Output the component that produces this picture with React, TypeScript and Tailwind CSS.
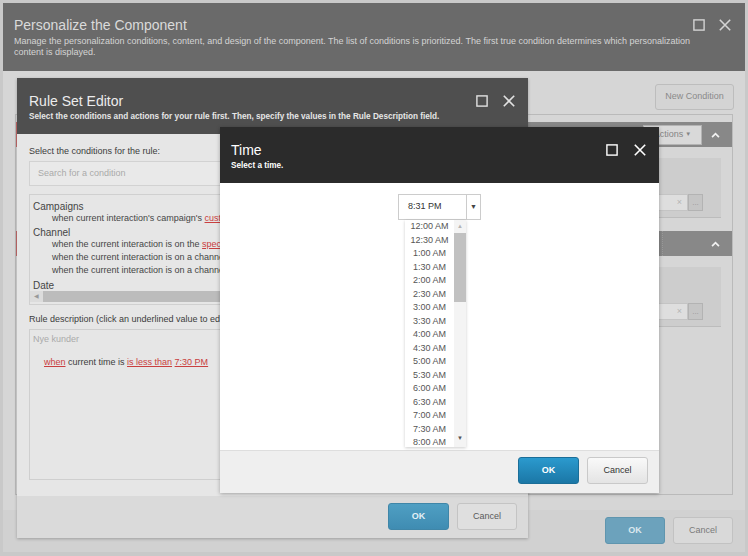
import React from 'react';

const times = [
  '12:00 AM', '12:30 AM', '1:00 AM', '1:30 AM', '2:00 AM', '2:30 AM', '3:00 AM', '3:30 AM', '4:00 AM',
  '4:30 AM', '5:00 AM', '5:30 AM', '6:00 AM', '6:30 AM', '7:00 AM', '7:30 AM', '8:00 AM',
];

const MaximizeIcon = ({ className }: { className: string }) => (
  <svg viewBox="0 0 12 12" className={className} fill="none" stroke="currentColor" strokeWidth="1.4">
    <rect x="0.9" y="0.9" width="10.2" height="10.2" />
  </svg>
);

const CloseIcon = ({ className }: { className: string }) => (
  <svg viewBox="0 0 12 12" className={className} fill="none" stroke="currentColor" strokeWidth="1.6">
    <path d="M0.8 0.8l10.4 10.4M11.2 0.8L0.8 11.2" />
  </svg>
);

const ChevronUp = () => (
  <svg viewBox="0 0 10 7" className="h-[6px] w-[9px]" fill="none" stroke="#f2f2f2" strokeWidth="2">
    <path d="M1 6l4-4 4 4" />
  </svg>
);

const WindowButtons = ({ color, gap }: { color: string; gap: string }) => (
  <div className={`flex h-[18px] items-center ${gap} ${color}`}>
    <MaximizeIcon className="h-3 w-3" />
    <CloseIcon className="h-3 w-3" />
  </div>
);

const ConditionRow = ({ actions }: { actions?: boolean }) => (
  <div>
    <div className="flex h-[25px] items-center justify-end border-l-[3px] border-[#c46a6a] bg-[#888888]">
      {actions ? (
        <div className="flex h-[20px] w-[59px] items-center justify-center gap-[2px] border border-[#b3b3b3] bg-[#d9d9d9] text-[9px] text-[#858585]">
          Actions<span className="text-[6px]">▼</span>
        </div>
      ) : (
        <div className="mr-[39px] h-full border-r border-dotted border-[#9a9a9a]" />
      )}
      <div className="flex w-[30px] justify-start pl-[9px]">
        <ChevronUp />
      </div>
    </div>
    <div className="ml-[40px] mr-[11px] mt-[11px] mb-[13px] flex h-[60px] items-end justify-end border-b border-[#bcbcbc] bg-[#cdcdcd] pb-[6px] pr-[18px]">
      <div className="flex h-[17px] w-[260px] items-center justify-end border border-[#c4c4c4] bg-[#dedede] pr-[5px] text-[9px] text-[#b5b5b5]">
        ×
      </div>
      <div className="flex h-[17px] w-[15px] items-center justify-center border border-[#b3b3b3] bg-[#c5c5c5] text-[8px] text-[#999]">
        ...
      </div>
    </div>
  </div>
);

export default function App() {
  return (
    <div className="relative h-[556px] w-[748px] overflow-hidden bg-[#c9c9c9] font-['Liberation_Sans',Arial,sans-serif]">
      {/* base dialog */}
      <div className="absolute left-[3px] top-[3px] flex h-[549px] w-[742px] flex-col bg-[#d6d6d6]">
        <div className="flex h-[68px] shrink-0 items-start justify-between bg-[#6a6a6a] pl-[11px] pr-[14px] pt-[13px]">
          <div>
            <div className="text-[14px] leading-[18px] text-[#dadada]">Personalize the Component</div>
            <div className="mt-[2px] whitespace-nowrap text-[9px] leading-[11px] text-[#d4d4d4]">
              Manage the personalization conditions, content, and design of the component. The list of conditions is prioritized. The first true condition determines which personalization
              <br />
              content is displayed.
            </div>
          </div>
          <WindowButtons color="text-[#d4d4d4]" gap="gap-[14px]" />
        </div>
        <div className="flex flex-1 flex-col px-[12px] pb-[15px]">
          <div className="mt-[13px] flex justify-end">
            <div className="-mr-px flex h-[26px] w-[79px] items-center justify-center rounded-[3px] border border-[#bdbdbd] bg-[#d4d4d4] text-[9px] text-[#8a8a8a]">
              New Condition
            </div>
          </div>
          <div className="mt-[4px] flex-1 border border-[#bababa] pt-[7px]">
            <ConditionRow actions />
            <ConditionRow />
          </div>
        </div>
        <div className="flex h-[42px] shrink-0 justify-end gap-[8px] bg-[#d1d1d1] pr-[12px] pt-[7px]">
          <button className="h-[27px] w-[60px] rounded-[3px] border border-[#5f95ae] bg-[#6ca2bc] text-[9px] font-bold text-[#dbe8ee]">OK</button>
          <button className="h-[27px] w-[60px] rounded-[3px] border border-[#c2c2c2] bg-[#d9d9d9] text-[9px] text-[#7a7a7a]">Cancel</button>
        </div>
      </div>

      {/* rule set editor */}
      <div className="absolute left-[17px] top-[78px] flex h-[460px] w-[511px] flex-col shadow-[0_1px_3px_rgba(0,0,0,0.25)]">
        <div className="flex h-[56px] shrink-0 items-start justify-between bg-[#4f4f4f] pl-[12px] pr-[13px] pt-[14px]">
          <div>
            <div className="text-[14px] leading-[18px] text-[#ececec]">Rule Set Editor</div>
            <div className="mt-[1px] text-[8.2px] font-bold leading-[12px] text-[#e6e6e6]">
              Select the conditions and actions for your rule first. Then, specify the values in the Rule Description field.
            </div>
          </div>
          <WindowButtons color="text-[#e2e2e2]" gap="gap-[15px]" />
        </div>
        <div className="flex flex-1 flex-col bg-[#e6e6e6] px-[12px] pb-[16px] pt-[11px]">
          <div className="text-[9px] leading-[12px] text-[#3c3c3c]">Select the conditions for the rule:</div>
          <div className="mt-[4px] flex h-[25px] items-center border border-[#d2d2d2] bg-[#e9e9e9] pl-[8px] text-[9px] text-[#a9a9a9]">
            Search for a condition
          </div>
          <div className="mt-[8px] flex h-[111px] flex-col border border-[#d0d0d0] pb-[2px]">
            <div className="flex-1 overflow-hidden whitespace-nowrap pl-[3px] pt-[7px] text-[#454545]">
              <div className="text-[10px] leading-[10px]">Campaigns</div>
              <div className="pl-[19px] text-[9px] leading-[13px]">
                when current interaction's campaign's <span className="text-[#c94040] underline">custom facet</span> has a value that compares to value
              </div>
              <div className="mt-[3px] text-[10px] leading-[10px]">Channel</div>
              <div className="pl-[19px] text-[9px] leading-[13px]">
                when the current interaction is on the <span className="text-[#c94040] underline">specific</span> channel
              </div>
              <div className="pl-[19px] text-[9px] leading-[13px]">when the current interaction is on a channel of the specific type</div>
              <div className="pl-[19px] text-[9px] leading-[13px]">when the current interaction is on a channel of the specific group</div>
              <div className="mt-[4px] text-[10px] leading-[10px]">Date</div>
            </div>
            <div className="flex h-[11px] shrink-0 items-center bg-[#dcdcdc]">
              <div className="flex w-[13px] justify-center text-[6px] text-[#999]">◀</div>
              <div className="h-full flex-1 bg-[#bcbcbc]" />
            </div>
          </div>
          <div className="mt-[8px] whitespace-nowrap text-[9px] leading-[12px] text-[#3c3c3c]">
            Rule description (click an underlined value to edit it):
          </div>
          <div className="mt-[4px] flex-1 border border-[#cfcfcf] pl-[3px] pt-[3px] text-[9px]">
            <div className="leading-[12px] text-[#aaaaaa]">Nye kunder</div>
            <div className="mt-[11px] pl-[11px] leading-[12px] text-[#3c3c3c]">
              <span className="text-[#c94040] underline">when</span> current time is <span className="text-[#c94040] underline">is less than</span>{' '}
              <span className="text-[#c94040] underline">7:30 PM</span>
            </div>
          </div>
        </div>
        <div className="flex h-[42px] shrink-0 justify-end gap-[8px] bg-[#dadada] pr-[11px] pt-[7px]">
          <button className="h-[27px] w-[61px] rounded-[3px] border border-[#3f86a8] bg-gradient-to-b from-[#4f9fc3] to-[#3f8cb2] text-[9px] font-bold text-[#e3f0f6]">OK</button>
          <button className="h-[27px] w-[60px] rounded-[3px] border border-[#c4c4c4] bg-[#dfdfdf] text-[9px] text-[#5a5a5a]">Cancel</button>
        </div>
      </div>

      {/* time dialog */}
      <div className="absolute left-[220px] top-[127px] flex h-[366px] w-[439px] flex-col shadow-[0_1px_4px_rgba(0,0,0,0.3)]">
        <div className="flex h-[56px] shrink-0 items-start justify-between bg-[#2b2b2b] pl-[11px] pr-[13px] pt-[14px]">
          <div>
            <div className="text-[14px] leading-[18px] text-white">Time</div>
            <div className="mt-[1px] text-[8.2px] font-bold leading-[12px] text-white">Select a time.</div>
          </div>
          <WindowButtons color="text-white" gap="gap-[16px]" />
        </div>
        <div className="flex flex-1 justify-center bg-white pt-[11px]">
          <div className="relative flex h-[26px]">
            <div className="flex w-[69px] items-center border border-[#cccccc] pl-[9px] text-[9px] text-[#333]">8:31 PM</div>
            <div className="flex w-[14px] items-center justify-center border border-l-0 border-[#cccccc] text-[7px] text-[#444]">▼</div>
            <div className="absolute left-[7px] top-[26px] z-10 flex h-[227px] w-[61px] bg-white shadow-[0_1px_3px_rgba(0,0,0,0.2)]">
              <div className="flex-1 overflow-hidden">
                {times.map((t) => (
                  <div key={t} className="h-[13.5px] text-center text-[9px] leading-[13.5px] text-[#555]">
                    {t}
                  </div>
                ))}
              </div>
              <div className="flex w-[12px] flex-col items-center bg-[#f4f4f4]">
                <div className="h-[13px] pt-[2px] text-[6px] text-[#b5b5b5]">▲</div>
                <div className="h-[69px] w-full bg-[#c1c1c1]" />
                <div className="flex-1" />
                <div className="h-[13px] text-[6px] text-[#555]">▼</div>
              </div>
            </div>
          </div>
        </div>
        <div className="flex h-[43px] shrink-0 justify-end gap-[8px] border-t border-[#dedede] bg-[#efefef] pr-[11px] pt-[6px]">
          <button className="h-[27px] w-[61px] rounded-[3px] border border-[#1b6e98] bg-gradient-to-b from-[#2b9ace] to-[#1b77a6] text-[9px] font-bold text-white">OK</button>
          <button className="h-[27px] w-[61px] rounded-[3px] border border-[#c9c9c9] bg-gradient-to-b from-[#f9f9f9] to-[#e4e4e4] text-[9px] text-[#333]">Cancel</button>
        </div>
      </div>
    </div>
  );
}
